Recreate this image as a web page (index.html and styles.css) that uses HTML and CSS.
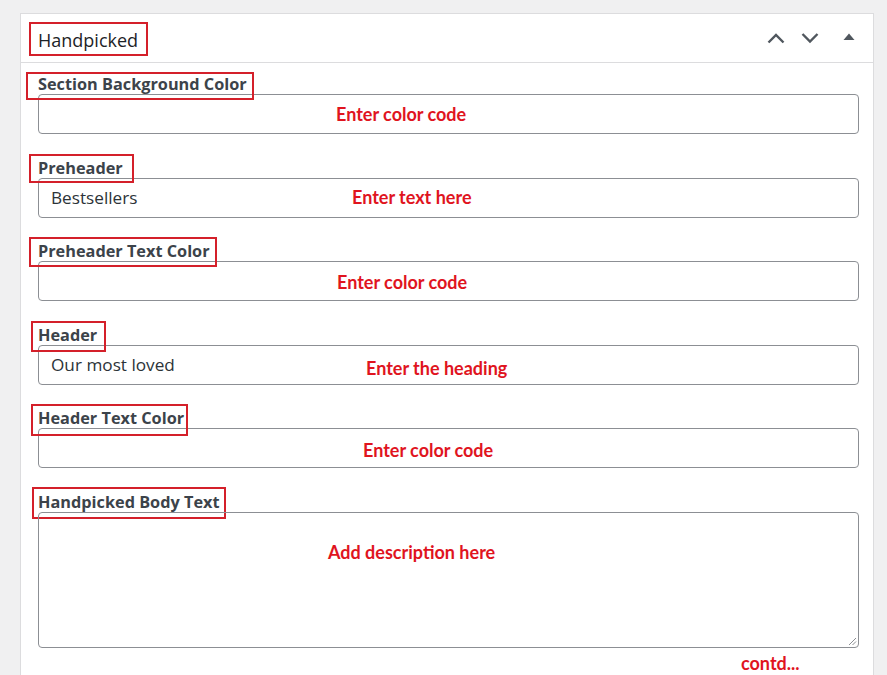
FILE: index.html
```html
<!DOCTYPE html>
<html>
<head>
<meta charset="utf-8">
<link rel="stylesheet" href="styles.css">
</head>
<body>
<div class="panel">
  <div class="panel-head">
    <h2 class="panel-title"><span class="title-box"></span>Handpicked</h2>
    <div class="head-actions">
      <svg class="ico" width="20" height="20" viewBox="0 0 20 20"><path d="M2.5 14.5 L10 7 L17.5 14.5" fill="none" stroke="#50575e" stroke-width="2.4"/></svg>
      <svg class="ico" width="20" height="20" viewBox="0 0 20 20"><path d="M2.5 6 L10 13.5 L17.5 6" fill="none" stroke="#50575e" stroke-width="2.4"/></svg>
      <svg class="ico tri" width="12" height="10" viewBox="0 0 12 10"><path d="M0.5 8 L6 1.5 L11.5 8 Z" fill="#50575e"/></svg>
    </div>
  </div>
  <div class="panel-body">
    <div class="field">
      <span class="box box-1"></span>
      <label class="lbl">Section Background Color</label>
      <div class="input"></div>
      <span class="note note-1">Enter color code</span>
    </div>
    <div class="field">
      <span class="box box-2"></span>
      <label class="lbl">Preheader</label>
      <div class="input">Bestsellers</div>
      <span class="note note-2">Enter text here</span>
    </div>
    <div class="field">
      <span class="box box-3"></span>
      <label class="lbl">Preheader Text Color</label>
      <div class="input"></div>
      <span class="note note-3">Enter color code</span>
    </div>
    <div class="field">
      <span class="box box-4"></span>
      <label class="lbl">Header</label>
      <div class="input">Our most loved</div>
      <span class="note note-4">Enter the heading</span>
    </div>
    <div class="field">
      <span class="box box-5"></span>
      <label class="lbl">Header Text Color</label>
      <div class="input"></div>
      <span class="note note-5">Enter color code</span>
    </div>
    <div class="field last">
      <span class="box box-6"></span>
      <label class="lbl">Handpicked Body Text</label>
      <div class="textarea">
        <svg class="grip" width="10" height="10" viewBox="0 0 10 10"><path d="M9 2 L2 9 M9 5.5 L5.5 9" stroke="#8c8f94" stroke-width="1"/></svg>
      </div>
      <span class="note note-6">Add description here</span>
    </div>
    <div class="contd">contd...</div>
  </div>
</div>
</body>
</html>
```
FILE: styles.css
```css
* { box-sizing: border-box; }
html, body { margin: 0; padding: 0; }
body {
  background: #f0f0f1;
  font-family: "Open Sans", "Noto Sans", sans-serif;
  width: 887px;
  height: 675px;
  overflow: hidden;
}
.panel {
  margin: 13px 0 0 20px;
  width: 854px;
  height: 700px;
  background: #fff;
  border: 1px solid #dcdcde;
}
.panel-head {
  height: 49px;
  border-bottom: 1px solid #dcdcde;
  display: flex;
  align-items: center;
  justify-content: space-between;
  padding: 3px 18px 0 17px;
}
.panel-title {
  position: relative;
  margin: 0;
  font-size: 18px;
  font-weight: 400;
  color: #1d2327;
  line-height: 24px;
}
.title-box {
  position: absolute;
  left: -9px;
  top: -6px;
  width: 119px;
  height: 34px;
  border: 2px solid #d4202a;
}
.head-actions {
  display: flex;
  align-items: center;
  gap: 14px;
  margin-top: -3px;
}
.ico { display: block; }
.tri { margin-left: 9.5px; margin-top: -2px; }
.panel-body {
  padding: 11px 14px 0 17px;
}
.field {
  position: relative;
  margin-bottom: 23.6px;
}
.lbl {
  display: block;
  height: 20px;
  line-height: 20px;
  font-size: 16.3px;
  font-weight: 700;
  color: #3c434a;
}
.input {
  height: 40px;
  border: 1px solid #8c8f94;
  border-radius: 4px;
  padding: 0 12px;
  font-size: 17.2px;
  line-height: 38px;
  color: #2c3338;
}
.textarea {
  position: relative;
  height: 136px;
  border: 1px solid #8c8f94;
  border-radius: 4px;
}
.grip {
  position: absolute;
  right: 1px;
  bottom: 1px;
}
.box {
  position: absolute;
  border: 2px solid #d4202a;
}
.box-1 { left: -12px; top: -2px; width: 228px; height: 28px; }
.box-2 { left: -9px; top: -4px; width: 105px; height: 29px; }
.box-3 { left: -9px; top: -4px; width: 188px; height: 30px; }
.box-4 { left: -7px; top: -4px; width: 75px; height: 31px; }
.box-5 { left: -7px; top: -4px; width: 157px; height: 32px; }
.box-6 { left: -6px; top: -5px; width: 194px; height: 32px; }
.note, .contd {
  font-family: "Lato", "Liberation Sans", sans-serif;
  font-weight: 700;
  font-size: 18px;
  line-height: 20px;
  color: #e0141e;
}
.note {
  position: absolute;
  white-space: nowrap;
}
.note-1 { left: 298px; top: 30px; }
.note-2 { left: 314px; top: 29px; }
.note-3 { left: 299px; top: 31px; }
.note-4 { left: 328px; top: 33px; }
.note-5 { left: 325px; top: 32px; }
.note-6 { left: 290px; top: 50px; }
.field.last { margin-bottom: 5px; }
.contd {
  padding-left: 703px;
}
```
